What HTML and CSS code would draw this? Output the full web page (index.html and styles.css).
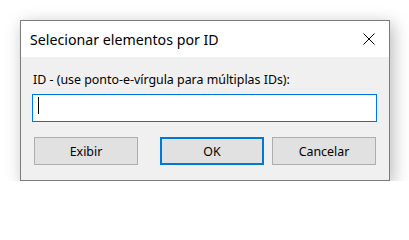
FILE: index.html
```html
<!DOCTYPE html>
<html lang="pt">
<head>
<meta charset="utf-8">
<title>Selecionar elementos por ID</title>
<link rel="stylesheet" href="styles.css">
</head>
<body>
<div class="dialog">
  <div class="titlebar">
    <span class="title">Selecionar elementos por ID</span>
    <svg class="close" width="12" height="12" viewBox="0 0 12 12"><path d="M0.5 0.5 L11.5 11.5 M11.5 0.5 L0.5 11.5" stroke="#000" stroke-width="1" fill="none"/></svg>
  </div>
  <div class="content">
    <div class="label">ID - (use ponto-e-vírgula para múltiplas IDs):</div>
    <div class="field"><span class="caret"></span></div>
    <div class="buttons">
      <div class="btn">Exibir</div>
      <div class="btn btn-default">OK</div>
      <div class="btn">Cancelar</div>
    </div>
  </div>
</div>
</body>
</html>
```

FILE: styles.css
```css
html, body {
  margin: 0;
  padding: 0;
  background: #ffffff;
}
body {
  font-family: "Noto Sans", "Open Sans", "Liberation Sans", sans-serif;
  color: #000;
}
.dialog {
  margin: 20px 0 0 20px;
  width: 370px;
  box-sizing: border-box;
  border: 1px solid #7b7b7b;
  box-shadow: 3px 4px 16px rgba(0, 0, 0, 0.28);
  background: #f0f0f0;
}
.titlebar {
  height: 36px;
  background: #ffffff;
  display: flex;
  align-items: center;
  padding: 0 14px 0 9px;
}
.title {
  font-size: 14.2px;
  flex: 1;
}
.close {
  display: block;
}
.content {
  padding: 15px 0 15px 0;
}
.label {
  font-size: 12.4px;
  line-height: 16px;
  padding-left: 12px;
}
.field {
  margin: 6px 0 0 11px;
  width: 345px;
  height: 28px;
  box-sizing: border-box;
  border: 1px solid #0078d7;
  background: #fff;
  padding: 2px 0 0 5px;
}
.caret {
  display: block;
  width: 1px;
  height: 17px;
  background: #000;
}
.buttons {
  display: flex;
  margin-top: 15px;
  padding-left: 13px;
}
.btn {
  width: 104px;
  height: 28px;
  box-sizing: border-box;
  border: 1px solid #adadad;
  background: #e1e1e1;
  font-size: 12.4px;
  display: flex;
  align-items: center;
  justify-content: center;
}
.btn-default {
  border: 2px solid #0078d7;
  margin: 0 8px 0 22px;
}
```
